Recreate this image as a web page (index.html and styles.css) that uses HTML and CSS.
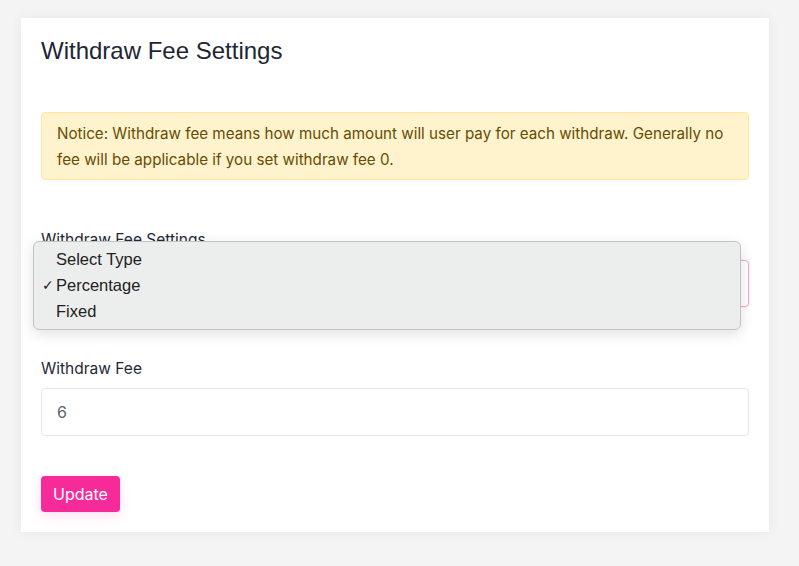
FILE: index.html
```html
<!DOCTYPE html>
<html>
<head>
<meta charset="utf-8">
<link rel="stylesheet" href="styles.css">
</head>
<body>
<div class="page">
  <div class="card">
    <h2 class="title">Withdraw Fee Settings</h2>
    <div class="notice">Notice: Withdraw fee means how much amount will user pay for each withdraw. Generally no fee will be applicable if you set withdraw fee 0.</div>
    <div class="field field-select">
      <label class="label">Withdraw Fee Settings</label>
      <div class="select">Percentage</div>
      <div class="menu">
        <div class="opt"><span class="chk"></span>Select Type</div>
        <div class="opt"><span class="chk">✓</span>Percentage</div>
        <div class="opt"><span class="chk"></span>Fixed</div>
      </div>
    </div>
    <div class="field field-fee">
      <label class="label">Withdraw Fee</label>
      <div class="input">6</div>
    </div>
    <button class="btn">Update</button>
  </div>
</div>
</body>
</html>
```
FILE: styles.css
```css
* { box-sizing: border-box; }
html, body { margin: 0; padding: 0; }
body { background: #f4f4f4; font-family: Inter, "Noto Sans", sans-serif; }
.page { padding: 18px 30px 34px 21px; }
.card {
  background: #fff;
  width: 748px;
  height: 514px;
  padding: 20px 20px 0 20px;
  box-shadow: 0 0 12px rgba(0,0,0,0.06);
}
.title {
  margin: 0;
  font-family: "Liberation Sans", Arial, sans-serif;
  font-weight: 400;
  font-size: 24px;
  line-height: 26px;
  color: #1e2635;
  height: 26px;
}
.notice {
  margin-top: 48px;
  background: #fff3cd;
  border: 1px solid #ffe69c;
  border-radius: 4px;
  color: #664d03;
  font-size: 15.2px;
  line-height: 26px;
  padding: 8px 15px;
  height: 68px;
}
.field { position: relative; }
.field-select { margin-top: 50px; }
.label {
  display: block;
  font-size: 15.5px;
  line-height: 20px;
  color: #1f2937;
  height: 20px;
}
.select {
  margin-top: 10px;
  height: 47px;
  border: 1px solid #f7a6d3;
  border-radius: 4px;
  box-shadow: 0 0 0 1px rgba(247,42,154,0.08);
  padding: 13px 15px;
  color: #555;
  font-size: 16px;
}
.menu {
  position: absolute;
  left: -8px;
  top: 11px;
  width: 708px;
  height: 89px;
  background: #eceeed;
  border: 1px solid #c3c3c3;
  border-radius: 6px;
  box-shadow: 0 4px 14px rgba(0,0,0,0.12);
  padding: 4px 0 0 8px;
  font-family: "Liberation Sans", Arial, sans-serif;
  font-size: 16.5px;
  color: #222;
}
.opt { height: 26px; line-height: 26px; display: flex; }
.chk { width: 14px; display: inline-block; font-size: 14px; font-family: "DejaVu Sans", sans-serif; }
.field-fee { margin-top: 52px; }
.input {
  margin-top: 9px;
  height: 48px;
  border: 1px solid #e6e6e6;
  border-radius: 4px;
  padding: 13px 15px;
  font-size: 16px;
  line-height: 20px;
  color: #5b616b;
}
.btn {
  margin-top: 40px;
  display: block;
  background: #f72a9a;
  color: #fff;
  border: 0;
  border-radius: 4px;
  height: 36px;
  padding: 0 12px;
  font-family: Inter, sans-serif;
  font-size: 16px;
  box-shadow: 0 4px 12px rgba(247,42,154,0.15);
}
```
